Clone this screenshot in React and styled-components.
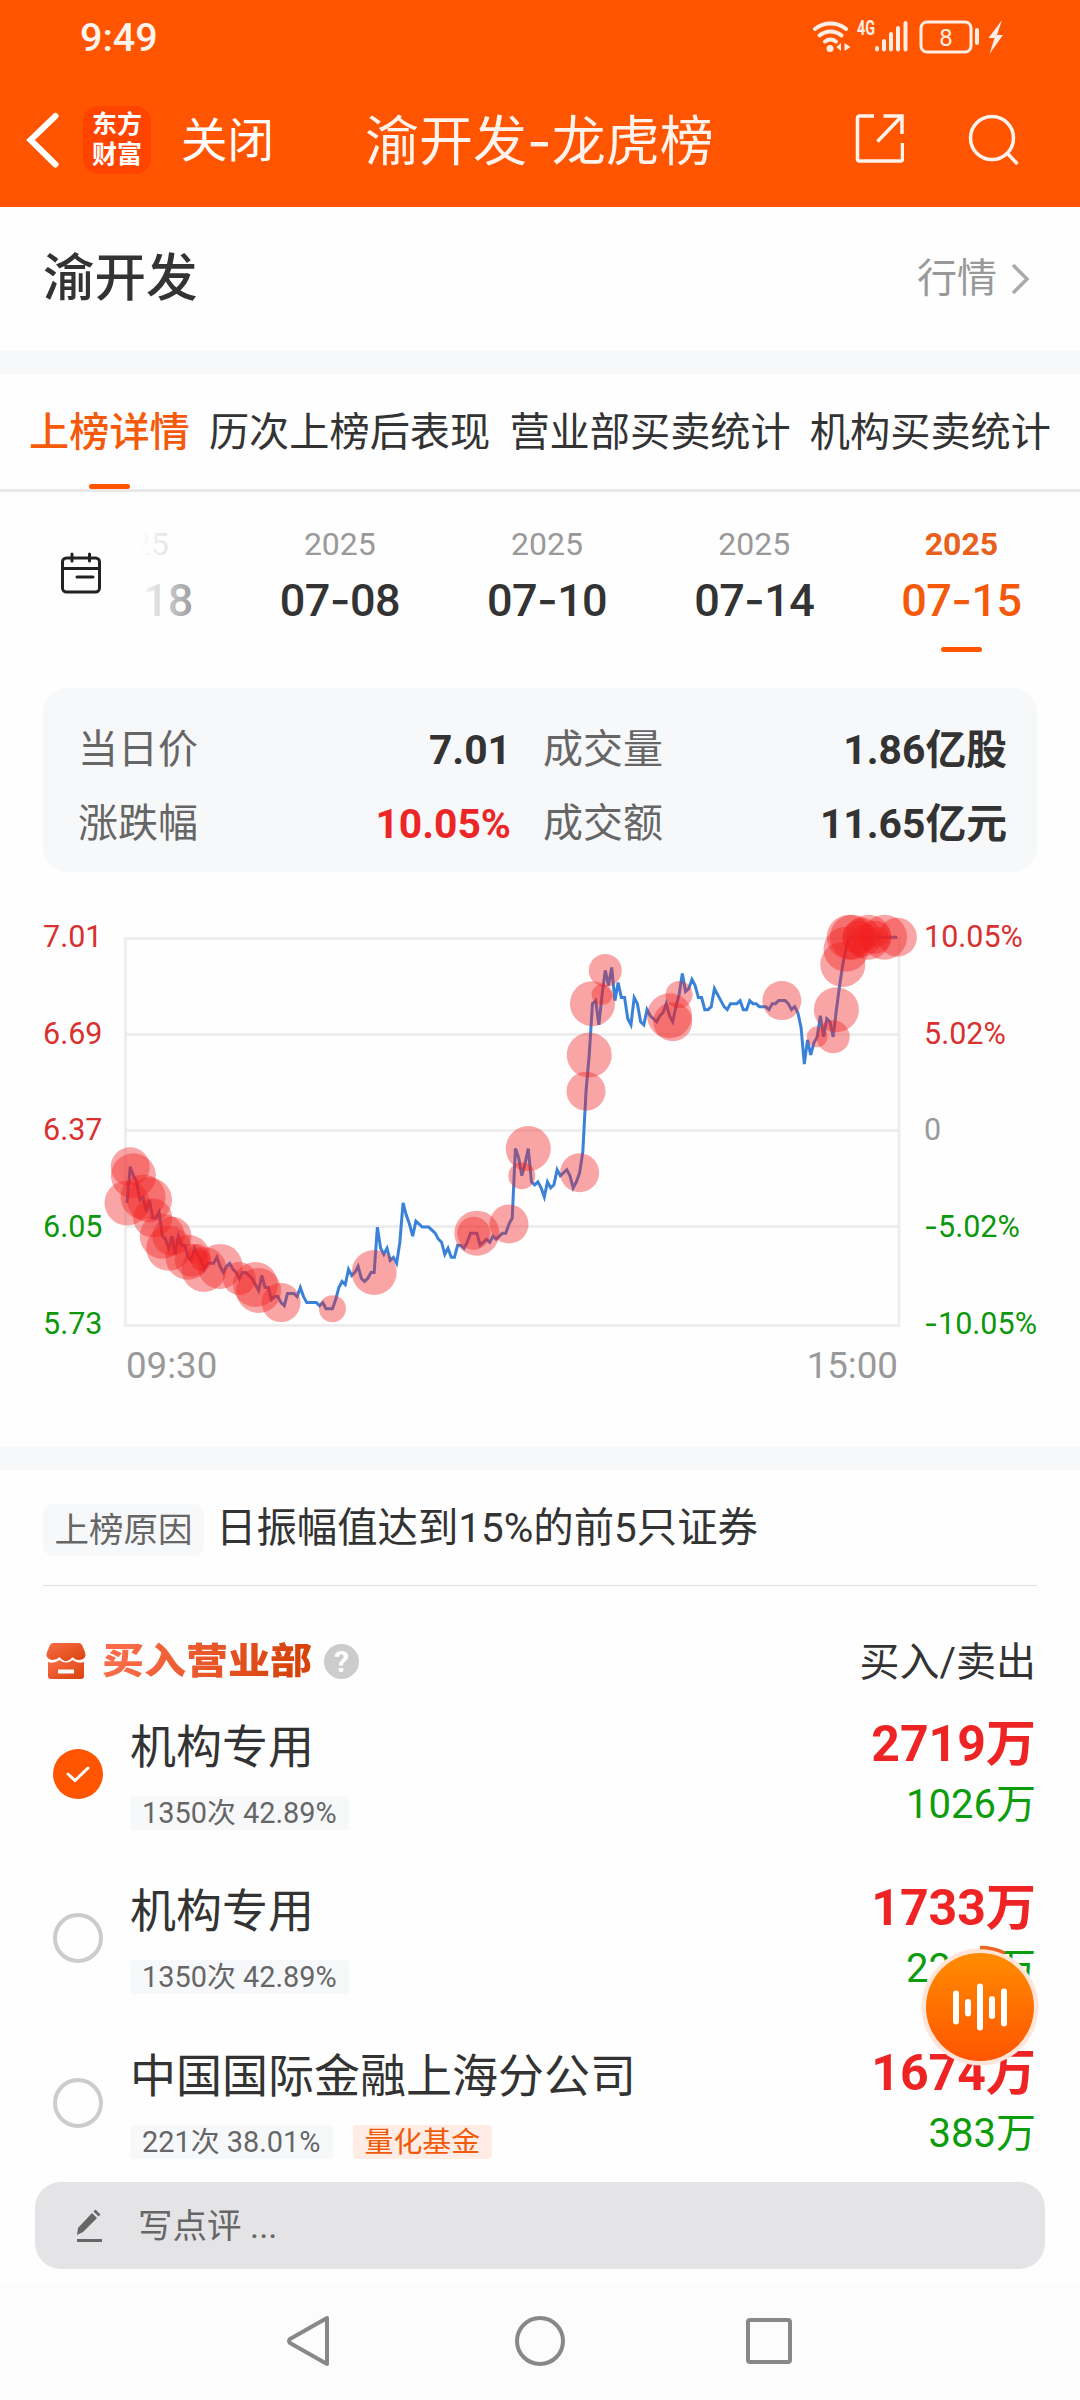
import React from "react";
import styled, { createGlobalStyle } from "styled-components";

const GlobalStyle = createGlobalStyle`
  * {
    box-sizing: border-box;
  }

  body {
    margin: 0;
    background: #fefefe;
    color: #333;
    font-family: Roboto, "Noto Sans CJK SC", sans-serif;
    white-space: nowrap;
  }

  svg {
    display: block;
    flex-shrink: 0;
  }
`;

const Whole = styled.div`
  position: relative;
  width: 1080px;
  height: 2400px;
  overflow: hidden;

  display: flex;
  flex-direction: column;
`;

const Top = styled.header`
  height: 207px;
  background: #ff5500;
  color: #fff3ee;
`;

const StatusBar = styled.div`
  height: 76px;
  padding: 0 75px 0 80px;

  display: flex;
  align-items: center;
  justify-content: space-between;
`;

const Clock = styled.span`
  font-size: 39.5px;
  line-height: 76px;
  font-weight: 500;
`;

const NavBar = styled.div`
  height: 131px;
  padding: 0 60px 4px 26px;

  display: flex;
  align-items: center;
`;

const Logo = styled.div`
  width: 68px;
  height: 68px;
  margin-left: 24px;
  border-radius: 15px;
  background: #ff4400;
  color: #fff;
  font-size: 25px;
  line-height: 30px;
  font-weight: 700;

  display: flex;
  flex-direction: column;
  align-items: center;
  justify-content: center;
`;

const Close = styled.span`
  margin-left: 30px;
  padding-top: 3px;
  font-size: 46.5px;
  line-height: 64px;
  color: #fff;
`;

const Title = styled.h1`
  margin: 0 0 0 91px;
  padding-top: 6px;
  width: 349px;
  font-size: 54px;
  line-height: 70px;
  font-weight: 400;
`;

const Dash = styled.span`
  font-family: Inter, sans-serif;
  line-height: 0;
`;

const Actions = styled.div`
  flex: 1;
  display: flex;
  justify-content: flex-end;
  gap: 64px;
  padding-bottom: 2px;
`;

const StockRow = styled.div`
  height: 144px;
  padding: 1px 49px 0 43px;

  display: flex;
  align-items: center;
  justify-content: space-between;
`;

const StockName = styled.h2`
  margin: 0;
  font-size: 51.5px;
  line-height: 70px;
  font-weight: 500;
`;

const QuoteLink = styled.div`
  display: flex;
  align-items: center;
  gap: 14px;
  color: #999;
  font-size: 40px;
  line-height: 56px;
`;

const Gap = styled.div`
  height: 23px;
  background: #f7f8fa;
`;

const Tabs = styled.nav`
  height: 118px;
  padding: 0 29px;
  border-bottom: 3px solid #e8e8e8;

  display: flex;
  justify-content: space-between;
`;

const Tab = styled.div`
  height: 115px;
  padding-top: 31px;
  font-size: 40.2px;
  line-height: 56px;
  color: ${(props) => (props.$active ? "#f55a0a" : "#333")};
  font-weight: ${(props) => (props.$active ? 500 : 400)};

  display: flex;
  flex-direction: column;
  align-items: center;
  justify-content: space-between;
`;

const Mark = styled.i`
  width: 41px;
  height: 5px;
  border-radius: 3px;
  background: #ff5500;
`;

const Dates = styled.div`
  height: 196px;
  padding-left: 60px;

  display: flex;
`;

const CalendarWrap = styled.div`
  width: 75px;
  padding-top: 60px;
`;

const DateList = styled.div`
  position: relative;
  flex: 1;
  overflow: hidden;

  display: flex;
  justify-content: flex-end;
  padding-right: 15px;
`;

const DateFade = styled.div`
  position: absolute;
  left: 0;
  top: 0;
  width: 105px;
  height: 196px;
  background: linear-gradient(to right, #fefefe 4%, rgba(254, 254, 254, 0.1));
`;

const DateItem = styled.div`
  flex: 0 0 207.2px;
  padding-top: 32px;
  color: ${(props) => (props.$active ? "#f55a0a" : "#333")};

  display: flex;
  flex-direction: column;
  align-items: center;
`;

const Year = styled.span`
  font-size: 32px;
  line-height: 40px;
  color: ${(props) => (props.$active ? "#e8601c" : "#999")};
  font-weight: ${(props) => (props.$active ? 700 : 400)};
`;

const Day = styled.span`
  margin: 9px 0 18px;
  font-size: 45px;
  line-height: 56px;
  font-weight: 500;
  letter-spacing: -0.6px;
`;

const Summary = styled.section`
  height: 184px;
  margin: 0 43px;
  padding: 25px 30px 11px 35px;
  border-radius: 24px;
  background: #f7f8fa;

  display: grid;
  grid-template-columns: 433px 464px;
  column-gap: 32px;
`;

const SummaryItem = styled.div`
  font-size: 40px;
  line-height: 74px;
  color: #666;

  display: flex;
  justify-content: space-between;
`;

const SummaryValue = styled.b`
  color: ${(props) => (props.$up ? "#ec2626" : "#333")};
  font-weight: 700;
  font-size: 40.8px;
`;

const Chart = styled.section`
  height: 576px;
  padding-top: 45px;
  display: grid;
  grid-template-columns: 103px 821px 1fr;
  grid-template-rows: 425px 50px;
`;

const Axis = styled.div`
  padding-left: ${(props) => (props.$left ? "43px" : "0")};

  display: flex;
  flex-direction: column;
  gap: 56.8px;
`;

const tones = { up: "#d93030", down: "#0c970c", flat: "#999" };

const AxisLabel = styled.span`
  font-size: 30.5px;
  line-height: 40px;
  color: ${(props) => tones[props.$tone]};
`;

const Times = styled.div`
  grid-column: 2;
  padding: 0 26px 0 23px;
  color: #999;
  font-size: 36.7px;
  line-height: 47px;

  display: flex;
  justify-content: space-between;
`;

const Reason = styled.div`
  height: 116px;
  margin: 0 43px;
  border-bottom: 1px solid #e0e0e0;

  display: flex;
  align-items: center;
  gap: 12px;
`;

const ReasonTag = styled.span`
  margin-top: 5px;
  width: 161px;
  height: 52px;
  border-radius: 10px;
  background: #f7f8fa;
  color: #666;
  font-size: 34.5px;
  line-height: 53px;
  text-align: center;
`;

const ReasonText = styled.span`
  padding-top: 3px;
  font-size: 40.4px;
  line-height: 56px;
`;

const ListHead = styled.div`
  height: 112px;
  padding: 38px 44px 0 46px;

  display: flex;
  align-items: center;
`;

const ListTitle = styled.h3`
  margin: 2px 12px 0 16px;
  font-size: 42px;
  line-height: 60px;
  font-weight: 900;
  transform: scaleY(0.87);
  color: transparent;
  background: linear-gradient(100deg, #fa6c48 10%, #d8430c 90%);
  background-clip: text;
`;

const Help = styled.span`
  margin-top: 1px;
  width: 35px;
  height: 35px;
  border-radius: 50%;
  background: #ccc;
  color: #fff;
  font-size: 30px;
  line-height: 36px;
  font-weight: 700;
  text-align: center;
`;

const Columns = styled.span`
  margin-left: auto;
  padding-top: 3px;
  font-size: 40px;
  line-height: 56px;
`;

const Seat = styled.div`
  height: 164.3px;
  padding: 16px 44px 0 53px;

  display: flex;
`;

const Radio = styled.span`
  width: 50px;
  height: 50px;
  margin-top: 35px;
  border-radius: 50%;
  border: ${(props) => (props.$checked ? "none" : "4px solid #ccc")};
  background: ${(props) => (props.$checked ? "#ff5500" : "transparent")};

  display: flex;
  align-items: center;
  justify-content: center;
`;

const SeatInfo = styled.div`
  flex: 1;
  margin-left: 27px;
  padding-top: 1px;
`;

const SeatName = styled.div`
  font-size: 46px;
  line-height: 64px;
`;

const Tags = styled.div`
  margin-top: 17px;
  display: flex;
  gap: 20px;
`;

const Tag = styled.span`
  height: 34px;
  padding: 0 12px;
  border-radius: 4px;
  font-size: 28.9px;
  line-height: 34px;
  color: ${(props) => (props.$hot ? "#f05a0a" : "#666")};
  background: ${(props) => (props.$hot ? "#ffece4" : "#f7f8fa")};
`;

const Amounts = styled.div`
  display: flex;
  flex-direction: column;
  align-items: flex-end;
  padding-top: 1px;
`;

const Buy = styled.b`
  font-size: 50px;
  line-height: 59px;
  font-weight: 700;
  color: #ee2424;
`;

const Sell = styled.span`
  font-size: 40px;
  line-height: 62px;
  color: #0c9c0c;
`;

const Seats = styled.div`
  height: 484px;
`;

const Player = styled.div`
  position: absolute;
  left: 920px;
  top: 1945px;
`;

const Comment = styled.div`
  height: 87px;
  margin: 0 35px 13px;
  padding-left: 40px;
  border-radius: 26px;
  background: #e4e4e6;
  color: #666;
  font-size: 34.5px;
  line-height: 82px;

  display: flex;
  align-items: center;
  gap: 35px;
`;

const SystemNav = styled.footer`
  height: 118px;
  background: #fcfcfc;

  display: flex;
  justify-content: center;
  align-items: center;
  gap: 180px;
`;

// one price per minute, 09:30 - 15:00
const prices = [
  6.13, 6.25, 6.22, 6.2, 6.14, 6.15, 6.1, 6.14, 6.08, 6.08, 6.1, 6.02, 6.01,
  5.98, 6.02, 5.96, 6.02, 5.99, 5.99, 5.95, 5.94, 5.98, 5.96, 5.94, 5.91, 5.93,
  5.93, 5.93, 5.95, 5.92, 5.9, 5.92, 5.93, 5.91, 5.9, 5.88, 5.9, 5.9, 5.89,
  5.88, 5.86, 5.84, 5.89, 5.85, 5.85, 5.81, 5.82, 5.82, 5.8, 5.79, 5.83, 5.83,
  5.83, 5.82, 5.85, 5.82, 5.8, 5.8, 5.8, 5.8, 5.79, 5.8, 5.78, 5.78, 5.78,
  5.81, 5.85, 5.87, 5.86, 5.91, 5.89, 5.9, 5.92, 5.88, 5.87, 5.88, 5.9, 5.9,
  6.05, 5.98, 5.96, 5.98, 5.94, 5.95, 5.93, 6.0, 6.13, 6.09, 6.06, 6.02, 6.07,
  6.06, 6.05, 6.05, 6.05, 6.04, 6.03, 6.01, 6.0, 5.96, 5.98, 5.95, 5.95, 5.99,
  5.99, 5.98, 6.0, 6.03, 6.03, 6.03, 5.99, 6.0, 6.01, 6.0, 6.02, 6.01, 6.02,
  6.03, 6.03, 6.06, 6.08, 6.31, 6.28, 6.22, 6.26, 6.31, 6.2, 6.19, 6.2, 6.18,
  6.15, 6.2, 6.18, 6.19, 6.24, 6.22, 6.23, 6.24, 6.22, 6.18, 6.2, 6.23, 6.3,
  6.5, 6.62, 6.79, 6.8, 6.72, 6.82, 6.9, 6.85, 6.91, 6.8, 6.86, 6.81, 6.81,
  6.74, 6.72, 6.81, 6.79, 6.73, 6.72, 6.77, 6.75, 6.74, 6.73, 6.75, 6.76, 6.79,
  6.75, 6.73, 6.78, 6.82, 6.89, 6.83, 6.84, 6.87, 6.85, 6.81, 6.81, 6.77, 6.77,
  6.78, 6.84, 6.82, 6.8, 6.78, 6.77, 6.79, 6.79, 6.79, 6.8, 6.77, 6.77, 6.8,
  6.79, 6.79, 6.78, 6.78, 6.78, 6.77, 6.79, 6.79, 6.8, 6.8, 6.8, 6.79, 6.77,
  6.78, 6.76, 6.71, 6.59, 6.67, 6.62, 6.66, 6.68, 6.75, 6.68, 6.74, 6.73, 6.68,
  6.77, 6.85, 6.92, 6.97, 7.01, 7.01, 7.01, 7.01, 7.01, 7.01, 7.01, 7.01, 7.01,
  7.01, 7.01, 7.01, 7.01, 7.01, 7.01, 7.01,
];

// [minute, radius] of the large orders
const orders = [
  [0, 22.5], [1, 19.5], [2, 22.5], [5, 22.5], [7, 22.5], [8, 19.5], [11, 22.5],
  [13, 22.5], [14, 19.5], [19, 22.5], [20, 16.5], [22, 10.5], [23, 10.5],
  [24, 22.5], [29, 22.5], [35, 16.5], [40, 22.5], [41, 22.5], [48, 19.5],
  [64, 13.5], [77, 22.5], [108, 16.5], [109, 22.5], [119, 19.5], [123, 13.5],
  [125, 22.5], [141, 19.5], [143, 19.5], [144, 22.5], [145, 22.5], [148, 10.5],
  [149, 16.5], [169, 22.5], [170, 19.5], [172, 13.5], [204, 19.5], [215, 10.5],
  [220, 16.5], [221, 22.5], [223, 22.5], [224, 22.5], [225, 22.5], [226, 22.5],
  [228, 16.5], [229, 19.5], [230, 13.5], [231, 22.5], [233, 16.5], [234, 10.5],
  [236, 22.5], [240, 19.5],
];

const px = (minute) => 24 + minute * 3.21;
const py = (price) => 20.2 + (7.01 - price) * 302;

const PriceChart = () => (
  <svg width="821" height="425" viewBox="0 0 821 425" overflow="visible">
    <g stroke="#eee" strokeWidth="3" fill="none">
      {[21.5, 117.5, 213.5, 309.5, 408.5].map((y) => (
        <path key={y} d={`M21 ${y}H797`} />
      ))}
      <path d="M22.5 20V409M796 20V409" />
    </g>
    <polyline
      points={prices.map((price, i) => `${px(i)},${py(price)}`).join(" ")}
      fill="none"
      stroke="#3a82d8"
      strokeWidth="3"
    />
    {orders.map(([minute, r]) => (
      <circle
        key={minute}
        cx={px(minute)}
        cy={py(prices[minute])}
        r={r}
        fill="#f22020"
        fillOpacity="0.4"
      />
    ))}
  </svg>
);

const StatusIcons = () => (
  <svg width="194" height="50" viewBox="811 13 194 50" fill="none">
    <g stroke="#ffeee6" strokeWidth="4" strokeLinecap="round">
      <path d="M815 29a25 25 0 0 1 31 0" />
      <path d="M819.500 35.500a17 17 0 0 1 22 0" />
      <path d="M825 41.500a9 9 0 0 1 11 0" />
      <path d="M877 48v1.500M884 41v8.500M891 34v15.500M898 28v21.500M905.500 23v26.500" />
      <path d="M977 30v13" />
    </g>
    <g fill="#ffeee6">
      <circle cx="830" cy="48.500" r="3.500" />
      <path d="M841 43v8l-4.500-4zM844.500 43v8l6-4z" />
      <path d="M1002 20l-13.500 18h6l-5 16 13.500-19h-6z" />
    </g>
    <rect x="921" y="22" width="50" height="30" rx="6" stroke="#ffeee6" strokeWidth="3" />
    <text x="857" y="35" fontSize="20" fontWeight="700" fill="#ffeee6" textLength="18" lengthAdjust="spacingAndGlyphs">
      4G
    </text>
    <text x="946" y="45.500" fontSize="24" fill="#ffeee6" textAnchor="middle">
      8
    </text>
  </svg>
);

// Roboto's hyphen is too short next to its digits
const withDash = (text) => {
  const at = text.indexOf("-");
  if (at === -1) {
    return text;
  }
  return (
    <span>
      {text.slice(0, at)}
      <Dash>-</Dash>
      {text.slice(at + 1)}
    </span>
  );
};

const tabs = ["上榜详情", "历次上榜后表现", "营业部买卖统计", "机构买卖统计"];
const dates = ["06-18", "07-08", "07-10", "07-14", "07-15"];

const summary = [
  { label: "当日价", value: "7.01" },
  { label: "成交量", value: "1.86亿股" },
  { label: "涨跌幅", value: "10.05%", up: true },
  { label: "成交额", value: "11.65亿元" },
];

const priceAxis = [
  ["7.01", "up"],
  ["6.69", "up"],
  ["6.37", "up"],
  ["6.05", "down"],
  ["5.73", "down"],
];

const rateAxis = [
  ["10.05%", "up"],
  ["5.02%", "up"],
  ["0", "flat"],
  ["-5.02%", "down"],
  ["-10.05%", "down"],
];

const seats = [
  { name: "机构专用", stat: "1350次 42.89%", buy: "2719万", sell: "1026万", checked: true },
  { name: "机构专用", stat: "1350次 42.89%", buy: "1733万", sell: "2235万" },
  { name: "中国国际金融上海分公司", stat: "221次 38.01%", tag: "量化基金", buy: "1674万", sell: "383万" },
];

const App = () => {
  return (
    <Whole>
      <GlobalStyle />
      <Top>
        <StatusBar>
          <Clock>9:49</Clock>
          <StatusIcons />
        </StatusBar>
        <NavBar>
          <svg width="33" height="56" viewBox="0 0 33 56" fill="none" stroke="#fff" strokeWidth="6" strokeLinecap="round">
            <path d="M29.500 4L4.500 28l25 24.500" />
          </svg>
          <Logo>
            <span>东方</span>
            <span>财富</span>
          </Logo>
          <Close>关闭</Close>
          <Title>{withDash("渝开发-龙虎榜")}</Title>
          <Actions>
            <svg width="49" height="50" viewBox="0 0 49 50" fill="none" stroke="#fff3ee" strokeWidth="3.500">
              <path d="M19 3H4.500a2 2 0 0 0-2 2v41a2 2 0 0 0 2 2h41a2 2 0 0 0 2-2V30M28.500 3h18.500v18M46 4L22.500 28.500" />
            </svg>
            <svg width="52" height="52" viewBox="0 0 52 52" fill="none" stroke="#fff3ee" strokeWidth="3.500">
              <circle cx="24" cy="25" r="21.500" />
              <path d="M39 40l10.500 11" />
            </svg>
          </Actions>
        </NavBar>
      </Top>

      <StockRow>
        <StockName>渝开发</StockName>
        <QuoteLink>
          行情
          <svg width="20" height="32" viewBox="0 0 20 32" fill="none" stroke="#aaa" strokeWidth="3.500">
            <path d="M2 2l14 14L2 30" />
          </svg>
        </QuoteLink>
      </StockRow>
      <Gap />

      <Tabs>
        {tabs.map((tab, i) => (
          <Tab key={tab} $active={i === 0}>
            {tab}
            {i === 0 && <Mark />}
          </Tab>
        ))}
      </Tabs>

      <Dates>
        <CalendarWrap>
          <svg width="42" height="42" viewBox="0 0 42 42" fill="none" stroke="#222" strokeWidth="3" strokeLinecap="round">
            <rect x="2.500" y="6" width="37" height="34" rx="4" />
            <path d="M3 16.500h36M12 2v7M29.500 2v7M17 25h16" />
          </svg>
        </CalendarWrap>
        <DateList>
          {dates.map((date, i) => (
            <DateItem key={date} $active={i === 4}>
              <Year $active={i === 4}>2025</Year>
              <Day>{withDash(date)}</Day>
              {i === 4 && <Mark />}
            </DateItem>
          ))}
          <DateFade />
        </DateList>
      </Dates>

      <Summary>
        {summary.map((item) => (
          <SummaryItem key={item.label}>
            {item.label}
            <SummaryValue $up={item.up}>{item.value}</SummaryValue>
          </SummaryItem>
        ))}
      </Summary>

      <Chart>
        <Axis $left>
          {priceAxis.map(([text, tone]) => (
            <AxisLabel key={text} $tone={tone}>
              {text}
            </AxisLabel>
          ))}
        </Axis>
        <PriceChart />
        <Axis>
          {rateAxis.map(([text, tone]) => (
            <AxisLabel key={text} $tone={tone}>
              {withDash(text)}
            </AxisLabel>
          ))}
        </Axis>
        <Times>
          <span>09:30</span>
          <span>15:00</span>
        </Times>
      </Chart>
      <Gap />

      <Reason>
        <ReasonTag>上榜原因</ReasonTag>
        <ReasonText>日振幅值达到15%的前5只证券</ReasonText>
      </Reason>

      <ListHead>
        <svg width="40" height="36" viewBox="0 0 40 36">
          <defs>
            <linearGradient id="shop" x1="0" y1="0" x2="1" y2="1">
              <stop offset="0" stopColor="#fa6c48" />
              <stop offset="1" stopColor="#d8430c" />
            </linearGradient>
          </defs>
          <path
            fill="url(#shop)"
            d="M7 0h26q2 0 3 2l3 7q1 3 0 5-2 3-6 3-4 0-6.500-3-3 4-6.500 4t-6.500-4q-3 3-6.500 3-4 0-6-3-1-2 0-5l3-7q1-2 3-2z"
          />
          <path
            fill="url(#shop)"
            fillRule="evenodd"
            d="M2 19q6 2 11.500-2 6.500 5 13 0 5.500 4 11.500 2v14q0 3-3 3H5q-3 0-3-3zM12 26.500v4h16v-4z"
          />
        </svg>
        <ListTitle>买入营业部</ListTitle>
        <Help>?</Help>
        <Columns>买入/卖出</Columns>
      </ListHead>

      <Seats>
        {seats.map((seat, i) => (
          <Seat key={i}>
            <Radio $checked={seat.checked}>
              {seat.checked && (
                <svg width="26" height="20" viewBox="0 0 26 20" fill="none" stroke="#fff" strokeWidth="3" strokeLinecap="round">
                  <path d="M3 10l7 6.500L23 4" />
                </svg>
              )}
            </Radio>
            <SeatInfo>
              <SeatName>{seat.name}</SeatName>
              <Tags>
                <Tag>{seat.stat}</Tag>
                {seat.tag && <Tag $hot>{seat.tag}</Tag>}
              </Tags>
            </SeatInfo>
            <Amounts>
              <Buy>{seat.buy}</Buy>
              <Sell>{seat.sell}</Sell>
            </Amounts>
          </Seat>
        ))}
      </Seats>

      <Comment>
        <svg width="28" height="34" viewBox="0 0 28 34" fill="#666">
          <path d="M2 26l1-7L17 4l5 5L8 23zM18.500 2.500L20.500 0.500l5 5-2 2z" />
          <rect x="2" y="30" width="25" height="3" />
        </svg>
        写点评 ...
      </Comment>

      <SystemNav>
        <svg width="50" height="54" viewBox="0 0 50 54" fill="none" stroke="#888" strokeWidth="4" strokeLinejoin="round">
          <path d="M42 4v46L5 29q-2-2 0-4z" />
        </svg>
        <svg width="50" height="54" viewBox="0 0 50 54" fill="none" stroke="#888" strokeWidth="4">
          <circle cx="25" cy="27" r="23" />
        </svg>
        <svg width="50" height="54" viewBox="0 0 50 54" fill="none" stroke="#888" strokeWidth="4">
          <rect x="3" y="6" width="42" height="42" rx="2" />
        </svg>
      </SystemNav>

      <Player>
        <svg width="120" height="124" viewBox="0 0 120 124">
          <defs>
            <linearGradient id="player" x1="0" y1="0" x2="0" y2="1">
              <stop offset="0" stopColor="#ff8c00" />
              <stop offset="1" stopColor="#ff5500" />
            </linearGradient>
          </defs>
          <circle cx="60" cy="62" r="58.500" fill="#ffe4d9" />
          <circle cx="60" cy="62" r="54" fill="url(#player)" />
          <path d="M60 2.500a60 60 0 0 1 25 5.500" fill="none" stroke="#ee6420" strokeWidth="3.500" />
          <path
            d="M36 48.500v28M48 57v11.500M60 41.500v41M72 54v17M84 46.500v32"
            stroke="#fff"
            strokeWidth="6"
            strokeLinecap="round"
          />
        </svg>
      </Player>
    </Whole>
  );
};

export default App;
